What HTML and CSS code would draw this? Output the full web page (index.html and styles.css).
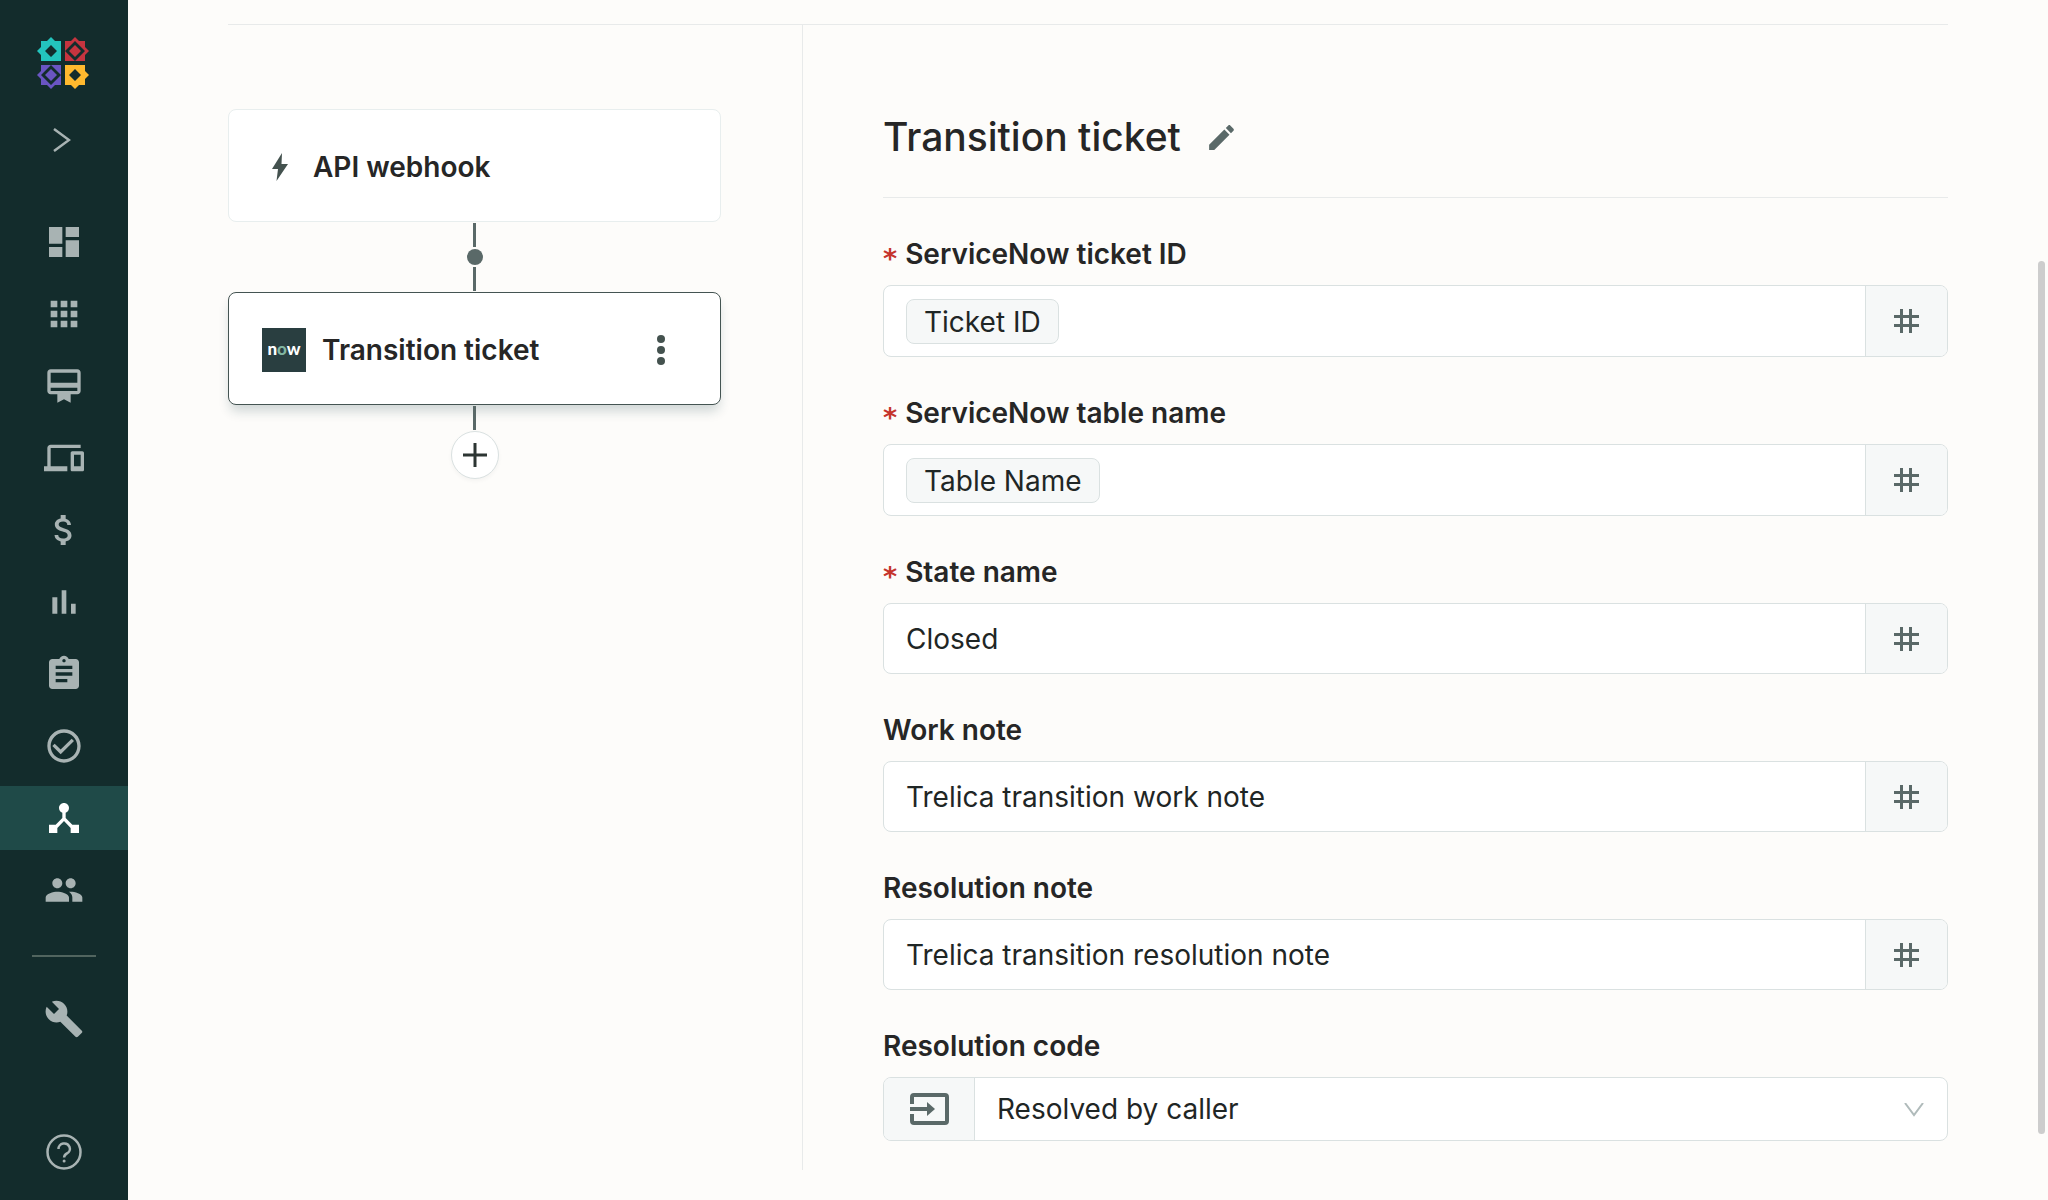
FILE: index.html
```html
<!DOCTYPE html>
<html lang="en">
<head>
<meta charset="utf-8">
<meta name="viewport" content="width=device-width, initial-scale=1">
<title>Workflow – Transition ticket</title>
<link rel="stylesheet" href="styles.css">
</head>
<body>
<svg class="sprite" aria-hidden="true">
  <symbol id="hash" viewBox="0 0 25 24"><path d="M6 0h3v24H6zM15 0h3v24h-3zM0 6h25v3H0zM0 15h25v3H0z"/></symbol>
</svg>
<div class="app">
  <aside class="sidebar">
    <a class="logo" href="#" aria-label="Home">
      <svg viewBox="0 0 52 52" width="52" height="52">
        <path fill="#23c4bd" fill-rule="evenodd" d="M4 4h6l4-4 4 4h6v20H4v-6l-4-4 4-4zM14 8l-6 6 6 6 6-6z"/>
        <path fill="#c5343f" fill-rule="evenodd" d="M28 4h6l4-4 4 4h6v6l4 4-4 4v6H28zM38 4L28 14l10 10 10-10z"/>
        <path fill="#c5343f" d="M38 8l6 6-6 6-6-6z"/>
        <path fill="#6a55c2" fill-rule="evenodd" d="M4 28h20v20h-6l-4 4-4-4H4v-6l-4-4 4-4zM14 28L4 38l10 10 10-10z"/>
        <path fill="#6a55c2" d="M14 32l6 6-6 6-6-6z"/>
        <path fill="#ffb92e" fill-rule="evenodd" d="M28 28h20v6l4 4-4 4v6h-6l-4 4-4-4h-6zM38 32l-6 6 6 6 6-6z"/>
      </svg>
    </a>
    <button class="expand" type="button" aria-label="Expand menu">
      <svg viewBox="0 0 18 24" width="18" height="24"><path d="M1 1l15 11L1 23" fill="none" stroke="#a8b3b3" stroke-width="2.500"/></svg>
    </button>
    <nav class="nav" aria-label="Main">
      <a href="#" aria-label="Dashboard"><svg viewBox="0 0 24 24"><path d="M3 13h8V3H3v10zm0 8h8v-6H3v6zm10 0h8V11h-8v10zm0-18v6h8V3h-8z"/></svg></a>
      <a href="#" aria-label="Applications"><svg viewBox="0 0 24 24"><path d="M4 8h4V4H4v4zm6 12h4v-4h-4v4zm-6 0h4v-4H4v4zm0-6h4v-4H4v4zm6 0h4v-4h-4v4zm6-10v4h4V4h-4zm-6 4h4V4h-4v4zm6 6h4v-4h-4v4zm0 6h4v-4h-4v4z"/></svg></a>
      <a href="#" aria-label="Licenses"><svg viewBox="0 0 24 24"><path d="M20 2H4c-1.110 0-2 .89-2 2v11c0 1.110.89 2 2 2h4v5l4-2 4 2v-5h4c1.110 0 2-.89 2-2V4c0-1.110-.89-2-2-2zm0 13H4v-2h16v2zm0-5H4V4h16v6z"/></svg></a>
      <a href="#" aria-label="Devices"><svg viewBox="0 0 24 24"><path d="M4 6h18V4H4c-1.100 0-2 .9-2 2v11H0v3h14v-3H4V6zm19 2h-6c-.55 0-1 .45-1 1v10c0 .55.45 1 1 1h6c.55 0 1-.45 1-1V9c0-.55-.45-1-1-1zm-1 9h-4v-7h4v7z"/></svg></a>
      <a href="#" aria-label="Spend"><svg viewBox="0 0 24 24"><path d="M11.800 10.900c-2.270-.59-3-1.200-3-2.150 0-1.090 1.010-1.850 2.700-1.850 1.780 0 2.440.85 2.500 2.100h2.210c-.07-1.720-1.120-3.300-3.210-3.810V3h-3v2.160c-1.940.42-3.500 1.680-3.500 3.610 0 2.310 1.910 3.460 4.700 4.130 2.500.6 3 1.480 3 2.410 0 .69-.49 1.790-2.700 1.790-2.060 0-2.870-.92-2.980-2.100h-2.200c.12 2.190 1.760 3.420 3.680 3.830V21h3v-2.150c1.950-.37 3.500-1.500 3.500-3.550 0-2.840-2.430-3.810-4.700-4.400z"/></svg></a>
      <a href="#" aria-label="Reports"><svg viewBox="0 0 24 24"><path d="M5 9.200h3V19H5zM10.600 5h2.800v14h-2.800zm5.600 8H19v6h-2.800z"/></svg></a>
      <a href="#" aria-label="Assessments"><svg viewBox="0 0 24 24"><path d="M19 3h-4.180C14.400 1.840 13.300 1 12 1c-1.300 0-2.400.84-2.820 2H5c-1.100 0-2 .9-2 2v14c0 1.100.9 2 2 2h14c1.100 0 2-.9 2-2V5c0-1.100-.9-2-2-2zm-7 0c.55 0 1 .45 1 1s-.45 1-1 1-1-.45-1-1 .45-1 1-1zm2 14H7v-2h7v2zm3-4H7v-2h10v2zm0-4H7V7h10v2z"/></svg></a>
      <a href="#" aria-label="Tasks"><svg viewBox="0 0 24 24"><path d="M16.590 7.580L10 14.170l-3.590-3.580L5 12l5 5 8-8zM12 2C6.480 2 2 6.480 2 12s4.480 10 10 10 10-4.480 10-10S17.520 2 12 2zm0 18c-4.420 0-8-3.580-8-8s3.580-8 8-8 8 3.580 8 8-3.580 8-8 8z"/></svg></a>
      <a class="active" href="#" aria-label="Workflows" aria-current="page"><svg viewBox="0 0 24 24"><path d="M17 16l-4-4V8.820C14.160 8.400 15 7.300 15 6c0-1.660-1.340-3-3-3S9 4.340 9 6c0 1.300.84 2.400 2 2.820V12l-4 4H3v5h5v-3.050l4-4.200 4 4.200V21h5v-5h-4z"/></svg></a>
      <a href="#" aria-label="People"><svg viewBox="0 0 24 24"><path d="M16 11c1.660 0 2.990-1.340 2.990-3S17.660 5 16 5c-1.660 0-3 1.340-3 3s1.340 3 3 3zm-8 0c1.660 0 2.990-1.340 2.990-3S9.660 5 8 5C6.340 5 5 6.340 5 8s1.340 3 3 3zm0 2c-2.330 0-7 1.170-7 3.500V19h14v-2.500c0-2.330-4.670-3.500-7-3.500zm8 0c-.29 0-.62.020-.97.050 1.160.84 1.970 1.970 1.970 3.450V19h6v-2.500c0-2.330-4.670-3.500-7-3.500z"/></svg></a>
      <hr>
      <a href="#" aria-label="Admin"><svg viewBox="0 0 24 24"><path d="M22.700 19l-9.100-9.100c.9-2.300.4-5-1.500-6.900-2-2-5-2.400-7.400-1.300L9 6 6 9 1.600 4.700C.4 7.100.9 10.100 2.900 12.100c1.900 1.900 4.600 2.400 6.900 1.500l9.100 9.100c.4.400 1 .4 1.400 0l2.300-2.300c.5-.4.5-1.100.1-1.400z"/></svg></a>
    </nav>
    <a class="help" href="#" aria-label="Help">
      <svg viewBox="0 0 36 36" width="36" height="36" fill="none" stroke="#a8b3b3"><circle cx="18" cy="18" r="16.500" stroke-width="2.500"/><path d="M12.500 15a5.700 5.300 0 1 1 8.500 4.400c-2.200 1.300-2.900 2-2.900 4" stroke-width="2.500"/><circle cx="18.100" cy="27" r="1.500" fill="#a8b3b3" stroke="none"/></svg>
    </a>
  </aside>

  <main class="workspace">
    <section class="flow" aria-label="Workflow steps">
      <button class="step" type="button">
        <svg class="bolt" viewBox="0 0 16 28" width="16" height="28"><path d="M10 0L0 16h6L4.500 28 16 11H9.500z" fill="#44524f"/></svg>
        <span>API webhook</span>
      </button>
      <div class="link"><i></i><b></b><i></i></div>
      <div class="step selected">
        <span class="now" aria-hidden="true">n<em>o</em>w</span>
        <span>Transition ticket</span>
        <button class="more" type="button" aria-label="More actions"><svg viewBox="0 0 8 30" width="8" height="30" fill="#44524f"><circle cx="4" cy="4" r="4"/><circle cx="4" cy="15" r="4"/><circle cx="4" cy="26" r="4"/></svg></button>
      </div>
      <div class="link"><i></i></div>
      <button class="add" type="button" aria-label="Add step"><svg viewBox="0 0 24 24" width="24" height="24"><path d="M0 12h24M12 0v24" stroke="#2c3533" stroke-width="3"/></svg></button>
    </section>

    <form class="details">
      <header class="heading">
        <h1>Transition ticket</h1>
        <button type="button" aria-label="Edit name"><svg viewBox="0 0 24 24" width="33" height="33"><path fill="#5a6968" d="M3 17.250V21h3.750L17.810 9.940l-3.750-3.750L3 17.250zM20.710 7.040c.39-.39.39-1.020 0-1.410l-2.340-2.340c-.39-.39-1.020-.39-1.410 0l-1.830 1.830 3.750 3.750 1.830-1.830z"/></svg></button>
      </header>

      <div class="field">
        <label class="required" for="ticket-id">ServiceNow ticket ID</label>
        <div class="control tall"><div class="tokens"><span class="chip">Ticket ID</span><input id="ticket-id" type="text"></div><button class="addon" type="button" aria-label="Insert variable"><svg><use href="#hash"/></svg></button></div>
      </div>
      <div class="field">
        <label class="required" for="table-name">ServiceNow table name</label>
        <div class="control tall"><div class="tokens"><span class="chip">Table Name</span><input id="table-name" type="text"></div><button class="addon" type="button" aria-label="Insert variable"><svg><use href="#hash"/></svg></button></div>
      </div>
      <div class="field">
        <label class="required" for="state-name">State name</label>
        <div class="control"><input id="state-name" type="text" value="Closed"><button class="addon" type="button" aria-label="Insert variable"><svg><use href="#hash"/></svg></button></div>
      </div>
      <div class="field">
        <label for="work-note">Work note</label>
        <div class="control"><input id="work-note" type="text" value="Trelica transition work note"><button class="addon" type="button" aria-label="Insert variable"><svg><use href="#hash"/></svg></button></div>
      </div>
      <div class="field">
        <label for="resolution-note">Resolution note</label>
        <div class="control"><input id="resolution-note" type="text" value="Trelica transition resolution note"><button class="addon" type="button" aria-label="Insert variable"><svg><use href="#hash"/></svg></button></div>
      </div>
      <div class="field">
        <label for="resolution-code">Resolution code</label>
        <div class="control picker">
          <button class="addon lead" type="button" aria-label="Switch input mode"><svg viewBox="0 0 39 32" width="39" height="32" fill="none" stroke="#5a6968" stroke-width="4"><path d="M2 11V4q0-2 2-2h31q2 0 2 2v24q0 2-2 2H4q-2 0-2-2v-7M0 16h19"/><path d="M17 9l8 7-8 7z" fill="#5a6968" stroke="none"/></svg></button>
          <select id="resolution-code"><option>Resolved by caller</option></select>
          <svg class="caret" viewBox="0 0 20 14" width="20" height="14"><path d="M1 0l9 12 9-12" fill="none" stroke="#b0bbbb" stroke-width="2"/></svg>
        </div>
      </div>
    </form>
  </main>
  <div class="scroll-thumb" aria-hidden="true"></div>
</div>
</body>
</html>
```
FILE: styles.css
```css
* { box-sizing: border-box; }

body {
  margin: 0;
  background: #fdfcfa;
  color: #262626;
  font: 28px/40px Inter, "Liberation Sans", sans-serif;
}

button, input, select { font: inherit; color: inherit; border: 0; background: none; padding: 0; margin: 0; }
button { cursor: pointer; }
svg { display: block; flex: none; }
.sprite { position: absolute; width: 0; height: 0; }

.app { display: flex; min-height: 100vh; }

/* Sidebar */
.sidebar {
  flex: none;
  width: 128px;
  background: #132c2c;
  display: flex;
  flex-direction: column;
  align-items: center;
  padding: 37px 0 30px;
}
.logo { margin-right: 2px; }
.expand { margin: 39px 4px 0 0; }
.nav { width: 100%; margin-top: 58px; display: flex; flex-direction: column; gap: 8px; }
.nav a { height: 64px; display: flex; align-items: center; justify-content: center; }
.nav svg { width: 40px; height: 40px; fill: #a8b3b3; }
.nav .active { background: #1f4a48; }
.nav .active svg { fill: #fff; }
.nav hr { width: 64px; height: 2px; border: 0; margin: 25px auto 22px; background: #51655f; }
.help { margin-top: auto; }

/* Workspace */
.workspace {
  flex: 1;
  min-width: 0;
  display: flex;
  margin: 24px 100px 30px;
  border-top: 1px solid #e8eaea;
}
.flow {
  flex: none;
  width: 575px;
  padding: 84px 81px 0 0;
  border-right: 1px solid #e8eaea;
  display: flex;
  flex-direction: column;
  align-items: center;
}
.step {
  width: 100%;
  height: 113px;
  display: flex;
  align-items: center;
  text-align: left;
  font-weight: 600;
  background: #fff;
  border: 1px solid #e8eeee;
  border-radius: 8px;
  padding: 2px 55px 0 33px;
}
.bolt { margin: 0 25px 0 10px; }
.step.selected { border-color: #445452; box-shadow: 0 8px 12px -2px rgba(19, 60, 70, .2); }
.now {
  width: 44px;
  height: 44px;
  margin-right: 16px;
  background: #293e40;
  color: #fff;
  font: 900 17px/42px Lato, sans-serif;
  text-align: center;
}
.now em { font-style: normal; color: #81b5a1; }
.more { margin-left: auto; }
.link { display: flex; flex-direction: column; align-items: center; gap: 2px; padding: 1px 0; }
.link i { width: 3px; height: 24px; background: #5a6968; }
.link b { width: 16px; height: 16px; border-radius: 50%; background: #5a6968; }
.add {
  width: 48px;
  height: 48px;
  display: grid;
  place-items: center;
  background: #fff;
  border: 1px solid #dae1e1;
  border-radius: 50%;
  box-shadow: 0 2px 4px rgba(0, 0, 0, .04);
}

/* Step details */
.details { flex: 1; min-width: 0; padding-left: 80px; }
.heading { height: 173px; display: flex; align-items: center; gap: 24px; padding-top: 52px; border-bottom: 1px solid #e8eaea; }
.heading h1 { margin: 0; font-size: 39px; line-height: 48px; font-weight: 500; }
.field { padding-top: 36px; }
.field label { display: block; height: 40px; margin-bottom: 11px; font-weight: 600; }
.required::before {
  content: "*";
  margin-right: 8px;
  color: #c5342c;
  font: bold 27px/0 "DejaVu Sans", sans-serif;
  vertical-align: -4px;
}
.control {
  height: 71px;
  display: flex;
  position: relative;
  background: #fff;
  border: 1px solid #dae1e1;
  border-radius: 8px;
  overflow: hidden;
  color: #1f2625;
}
.control.tall { height: 72px; }
.control.picker { height: 64px; }
.control input, .control select { flex: 1; min-width: 0; padding: 0 22px; appearance: none; outline: 0; }
.tokens { flex: 1; min-width: 0; display: flex; align-items: center; padding-left: 22px; }
.chip { height: 45px; padding: 0 17px; line-height: 45px; background: #f6f8f8; border: 1px solid #dae1e1; border-radius: 8px; }
.addon { flex: none; width: 82px; display: grid; place-items: center; background: #f6f8f8; border-left: 1px solid #dae1e1; }
.addon use { fill: #5a6968; }
.addon svg:not([viewBox]) { width: 25px; height: 24px; }
.addon.lead { width: 91px; border-left: 0; border-right: 1px solid #dae1e1; }
.caret { position: absolute; right: 23px; top: 25px; pointer-events: none; }

.scroll-thumb { position: fixed; right: 3px; top: 261px; bottom: 66px; width: 7px; border-radius: 4px; background: #cdcdcd; }
```
